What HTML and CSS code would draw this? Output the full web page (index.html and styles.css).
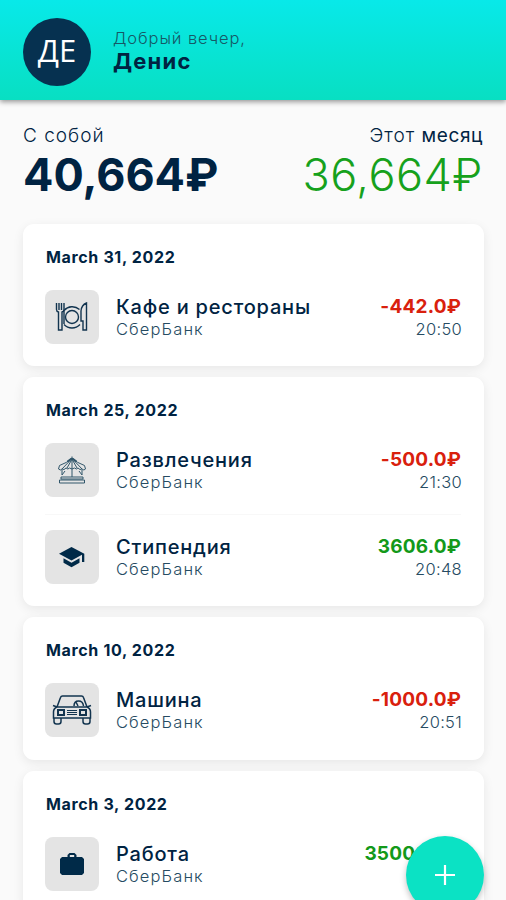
FILE: index.html
```html
<!DOCTYPE html>
<html lang="ru">

<head>
  <meta charset="utf-8">
  <title>Финансы</title>
  <link rel="stylesheet" href="styles.css">
</head>

<body>
  <header class="header">
    <div class="avatar">ДЕ</div>
    <div>
      <div class="hello">Добрый вечер,</div>
      <div class="username">Денис</div>
    </div>
  </header>

  <section class="balance">
    <div>
      <div class="label">С собой</div>
      <div class="total">40,664₽</div>
    </div>
    <div class="right">
      <div class="label">Этот <b>месяц</b></div>
      <div class="month">36,664₽</div>
    </div>
  </section>

  <main class="list">
    <div class="card">
      <div class="date">March 31, 2022</div>
      <div class="row">
        <div class="icon">
          <svg width="34" height="30" viewBox="0 0 34 30" fill="none" stroke="#12344f" stroke-width="1.4">
            <path d="M1.5 1v6.500q0 2 2 2.500v18h3.500V10q2-.5 2-2.500V1M4 1v7M6.500 1v7M28 28V19h-2V9q.500-6 5.500-8v27z" />
            <circle cx="17" cy="15" r="6.500" />
            <path d="M9 8.500a11 11 0 0 1 15.500-1M9 22.500a11 11 0 0 0 16 0M9 8v14" />
          </svg>
        </div>
        <div class="info">
          <div class="name">Кафе и рестораны</div>
          <div class="bank">СберБанк</div>
        </div>
        <div class="right">
          <div class="sum minus">-442.0₽</div>
          <div class="time">20:50</div>
        </div>
      </div>
    </div>

    <div class="card">
      <div class="date">March 25, 2022</div>
      <div class="row">
        <div class="icon">
          <svg width="28" height="28" viewBox="0 0 28 28" fill="none" stroke="#31566a" stroke-width="1">
            <path d="M14 .5v3M14 2Q9 7 1.500 9.500L.500 13q2 2 3.500 0 2 1.500 4-1 2 2 3.500 0 2.500 2 5 0 2 2 3.500 0 2 2.500 4 1 2 2 3.500 0l-1-3.500Q19 7 14 2zM12.500 4 4 13M13.500 4 9 12M14 4v17M14.500 4 19 12M15.500 4 24 13" />
            <path d="M4 14v5l3-4M24 14v5l-3-4M3 21h22v2H3zM1.500 24h25v3h-25z" />
            <path d="M9.500 5.500 13 3h2l3.500 2.500" stroke-width="1.800" />
          </svg>
        </div>
        <div class="info">
          <div class="name">Развлечения</div>
          <div class="bank">СберБанк</div>
        </div>
        <div class="right">
          <div class="sum minus">-500.0₽</div>
          <div class="time">21:30</div>
        </div>
      </div>
      <div class="row line">
        <div class="icon">
          <svg width="26" height="22" viewBox="0 0 26 22" fill="#002a48">
            <path d="M12.500 1 0 7.700l12.500 6.800 10.500-5.700V16h2.300V7.700z" />
            <path d="M4.500 12.300v4.400l8 4.500 8-4.500v-4.400l-8 4.400z" />
          </svg>
        </div>
        <div class="info">
          <div class="name">Стипендия</div>
          <div class="bank">СберБанк</div>
        </div>
        <div class="right">
          <div class="sum plus">3606.0₽</div>
          <div class="time">20:48</div>
        </div>
      </div>
    </div>

    <div class="card">
      <div class="date">March 10, 2022</div>
      <div class="row">
        <div class="icon">
          <svg width="40" height="30" viewBox="0 0 40 30" fill="none" stroke="#12344f" stroke-width="1.500">
            <path d="M5 12 8.500 2.500Q9 1 10.500 1h19q1.500 0 2 1.500L35 12M1 10.500l4 1.500h30l4-1.500M5 12q-3.500 1.500-3.500 5v6h37v-6q0-3.500-3.500-5" />
            <path d="M2 23v3.500Q2 29 4.500 29h2Q9 29 9 26.500V23M31 23v3.500q0 2.500 2.500 2.500h2q2.500 0 2.500-2.500V23M22 11q0-5 4.500-5t5 5M26 11l-2-4" />
            <path d="M6 15h6v5H6zM28 15h6v5h-6z" stroke-width="2" />
            <path d="M15 15.500h10M15 17.500h10M15 19.500h10" stroke-width="1" />
          </svg>
        </div>
        <div class="info">
          <div class="name">Машина</div>
          <div class="bank">СберБанк</div>
        </div>
        <div class="right">
          <div class="sum minus">-1000.0₽</div>
          <div class="time">20:51</div>
        </div>
      </div>
    </div>

    <div class="card">
      <div class="date">March 3, 2022</div>
      <div class="row">
        <div class="icon">
          <svg width="24" height="24" viewBox="0 0 24 24" fill="#002a48">
            <path d="M9.500 1h5l2 2v2H22l2 2v14l-2 2H2l-2-2V7l2-2h5.500V3zM9.800 3v2h4.400V3z" fill-rule="evenodd" />
          </svg>
        </div>
        <div class="info">
          <div class="name">Работа</div>
          <div class="bank">СберБанк</div>
        </div>
        <div class="right">
          <div class="sum plus">35000.0₽</div>
          <div class="time">20:47</div>
        </div>
      </div>
    </div>
  </main>

  <button class="add" type="button">
    <svg width="22" height="22" viewBox="0 0 22 22" stroke="#fff" stroke-width="2.200">
      <path d="M11 1v20M1 11h20" />
    </svg>
  </button>
</body>

</html>
```
FILE: styles.css
```css
* {
  box-sizing: border-box;
}

body {
  margin: 0;
  height: 900px;
  overflow: hidden;
  background-color: #fafafa;
  color: #002342;
  font-family: Inter, sans-serif;
  white-space: nowrap;
}

.header {
  display: flex;
  align-items: center;
  gap: 22px;
  height: 100px;
  padding: 3px 23px 0;
  background: linear-gradient(#08e9e9, #08dfc2);
  box-shadow: 0 2px 5px rgba(0, 0, 0, 0.4);
}

.avatar {
  width: 68px;
  height: 68px;
  border-radius: 50%;
  background-color: #063150;
  color: #fff;
  font-family: "Open Sans", sans-serif;
  font-size: 31px;
  font-weight: 400;
  line-height: 64px;
  text-align: center;
}

.hello {
  font-size: 16.5px;
  font-weight: 300;
  line-height: 20px;
  letter-spacing: 0.9px;
  color: #165866;
}

.username {
  font-size: 22px;
  font-weight: 700;
  line-height: 27px;
  letter-spacing: 1.2px;
}

.balance {
  display: flex;
  justify-content: space-between;
  padding: 24px 23px 0;
  height: 123.5px;
}

.right {
  text-align: right;
}

.label {
  font-size: 19px;
  font-weight: 300;
  line-height: 24px;
  letter-spacing: 1px;
}

.label b {
  letter-spacing: 0.6px;
}

.total,
.month {
  font-size: 45px;
  line-height: 54px;
  font-weight: 700;
}

.month {
  font-weight: 300;
  letter-spacing: 0.5px;
  color: #16a11c;
}

.list {
  display: flex;
  flex-direction: column;
  gap: 11px;
  padding: 0 22px 0 23px;
}

.card {
  padding: 22px 23px 22.5px 22px;
  border-radius: 11px;
  background-color: #fff;
  box-shadow: 0 3px 11px rgba(0, 0, 0, 0.08);
}

.date {
  height: 44.4px;
  padding-left: 1px;
  font-size: 16px;
  font-weight: 700;
  line-height: 23px;
  letter-spacing: 0.65px;
}

.row {
  display: flex;
  align-items: center;
  height: 53.5px;
}

.line {
  height: 87px;
  margin-bottom: -17px;
  margin-top: 17px;
  border-top: 1px solid #f8f8f8;
  padding-bottom: 17px;
  padding-top: 16px;
}

.icon {
  display: flex;
  align-items: center;
  justify-content: center;
  width: 54px;
  height: 54px;
  margin-right: 17px;
  border-radius: 8px;
  background-color: #e4e4e4;
}

.info {
  flex: 1;
}

.name {
  font-size: 20px;
  font-weight: 500;
  line-height: 24px;
  letter-spacing: 0.8px;
}

.bank,
.time {
  font-size: 16.5px;
  font-weight: 300;
  line-height: 20px;
  letter-spacing: 1.1px;
  color: #264b62;
}

.time {
  margin-right: -1px;
  letter-spacing: 0.3px;
}

.sum {
  font-size: 19px;
  font-weight: 700;
  line-height: 24px;
  letter-spacing: 0.2px;
}

.minus {
  color: #d9200d;
}

.plus {
  color: #13991a;
}

.add {
  display: flex;
  align-items: center;
  justify-content: center;
  position: absolute;
  left: 406px;
  top: 836px;
  width: 78px;
  height: 78px;
  padding: 0;
  border: none;
  border-radius: 50%;
  background-color: #0be2c4;
  box-shadow: 0 3px 6px rgba(0, 0, 0, 0.25);
}
```
